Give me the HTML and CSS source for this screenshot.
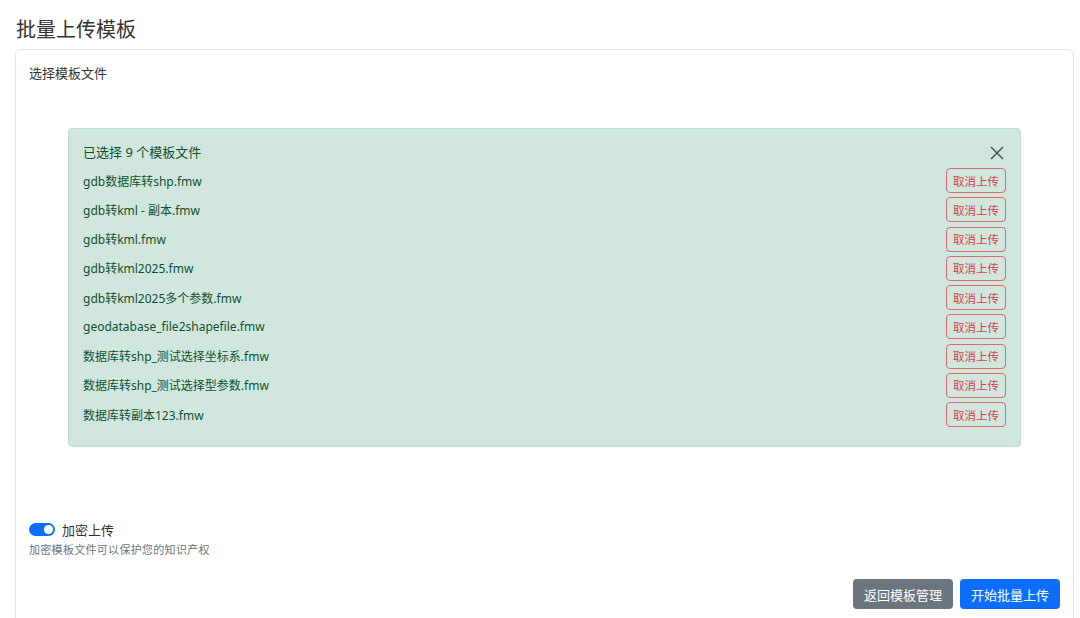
FILE: index.html
```html
<!DOCTYPE html>
<html lang="zh-CN">
  <head>
    <meta charset="UTF-8" />
    <meta name="viewport" content="width=device-width, initial-scale=1.0" />
    <title>批量上传模板</title>
    <link rel="stylesheet" href="styles.css">
  </head>

  <body>
    <div class="page">
      <h1 class="page-title">批量上传模板</h1>
      <div class="card">
        <div class="card-body">
          <div class="field-label">选择模板文件</div>

          <!-- selected files -->
          <div class="alert">
            <div class="alert-head">
              <span>已选择 9 个模板文件</span>
              <button class="btn-close" aria-label="关闭">
                <svg width="14" height="14" viewBox="0 0 14 14">
                  <path d="M1 1 L13 13 M13 1 L1 13" stroke="#4a5a55" stroke-width="1.6" fill="none" />
                </svg>
              </button>
            </div>
            <ul class="file-list">
              <li class="file-row"><span>gdb数据库转shp.fmw</span><button class="btn-cancel">取消上传</button></li>
              <li class="file-row"><span>gdb转kml - 副本.fmw</span><button class="btn-cancel">取消上传</button></li>
              <li class="file-row"><span>gdb转kml.fmw</span><button class="btn-cancel">取消上传</button></li>
              <li class="file-row"><span>gdb转kml2025.fmw</span><button class="btn-cancel">取消上传</button></li>
              <li class="file-row"><span>gdb转kml2025多个参数.fmw</span><button class="btn-cancel">取消上传</button></li>
              <li class="file-row"><span>geodatabase_file2shapefile.fmw</span><button class="btn-cancel">取消上传</button></li>
              <li class="file-row"><span>数据库转shp_测试选择坐标系.fmw</span><button class="btn-cancel">取消上传</button></li>
              <li class="file-row"><span>数据库转shp_测试选择型参数.fmw</span><button class="btn-cancel">取消上传</button></li>
              <li class="file-row"><span>数据库转副本123.fmw</span><button class="btn-cancel">取消上传</button></li>
            </ul>
          </div>

          <div class="switch-row">
            <span class="switch"><span class="knob"></span></span>
            <span class="switch-label">加密上传</span>
          </div>
          <div class="help-text">加密模板文件可以保护您的知识产权</div>

          <div class="actions">
            <button class="btn btn-secondary">返回模板管理</button>
            <button class="btn btn-primary">开始批量上传</button>
          </div>
        </div>
      </div>
    </div>
  </body>
</html>
```

FILE: styles.css
```css
body {
  margin: 0;
  background-color: #fff;
  font-family: "Noto Sans", "Noto Sans CJK SC", sans-serif;
  color: #212529;
}

.page {
  padding: 17px 6px 0 15px;
}

.page-title {
  margin: 0 0 6px 1px;
  font-size: 20px;
  font-weight: 400;
  line-height: 26px;
  color: #333;
}

.card {
  border: 1px solid #e3e5e8;
  border-radius: 6px;
  background-color: #fff;
  height: 640px;
}

.card-body {
  padding: 14px 13px 0 13px;
}

.field-label {
  font-size: 13px;
  line-height: 18px;
  color: #333;
}

.alert {
  margin: 46px 39px 0 39px;
  padding: 12px 14px 15px 14px;
  background-color: #d1e7dd;
  border: 1px solid #bfdccf;
  border-radius: 4px;
  color: #0f5132;
}

.alert-head {
  display: flex;
  justify-content: space-between;
  align-items: center;
  height: 20px;
  margin-bottom: 7px;
  font-size: 13px;
}

.btn-close {
  border: none;
  background: none;
  padding: 0;
  margin: 4px 2px 0 0;
  display: flex;
  cursor: pointer;
}

.file-list {
  list-style-type: none;
  margin: 0;
  padding: 0;
}

.file-row {
  display: flex;
  justify-content: space-between;
  align-items: center;
  height: 25px;
  margin-bottom: 4.25px;
  font-size: 12px;
}

.btn-cancel {
  height: 25px;
  padding: 0 6px;
  border: 1px solid #dc6a75;
  border-radius: 4px;
  background: transparent;
  color: #d9404e;
  font-family: inherit;
  font-size: 11.5px;
  cursor: pointer;
}

.switch-row {
  display: flex;
  align-items: center;
  margin-top: 73px;
  height: 18px;
}

.switch {
  position: relative;
  width: 26px;
  height: 13px;
  border-radius: 7px;
  background-color: #0d6efd;
}

.knob {
  position: absolute;
  top: 2px;
  right: 2px;
  width: 9px;
  height: 9px;
  border-radius: 50%;
  background-color: #fff;
}

.switch-label {
  margin-left: 7px;
  font-size: 13px;
  color: #333;
}

.help-text {
  margin-top: 4px;
  font-size: 11px;
  letter-spacing: 0.3px;
  line-height: 16px;
  color: #6c757d;
}

.actions {
  display: flex;
  justify-content: flex-end;
  gap: 7px;
  margin-top: 21px;
}

.btn {
  height: 30px;
  padding: 0 11px;
  border: none;
  border-radius: 4px;
  color: #fff;
  font-family: inherit;
  font-size: 13px;
  cursor: pointer;
}

.btn-secondary {
  background-color: #6c757d;
}

.btn-primary {
  background-color: #0d6efd;
}
```
